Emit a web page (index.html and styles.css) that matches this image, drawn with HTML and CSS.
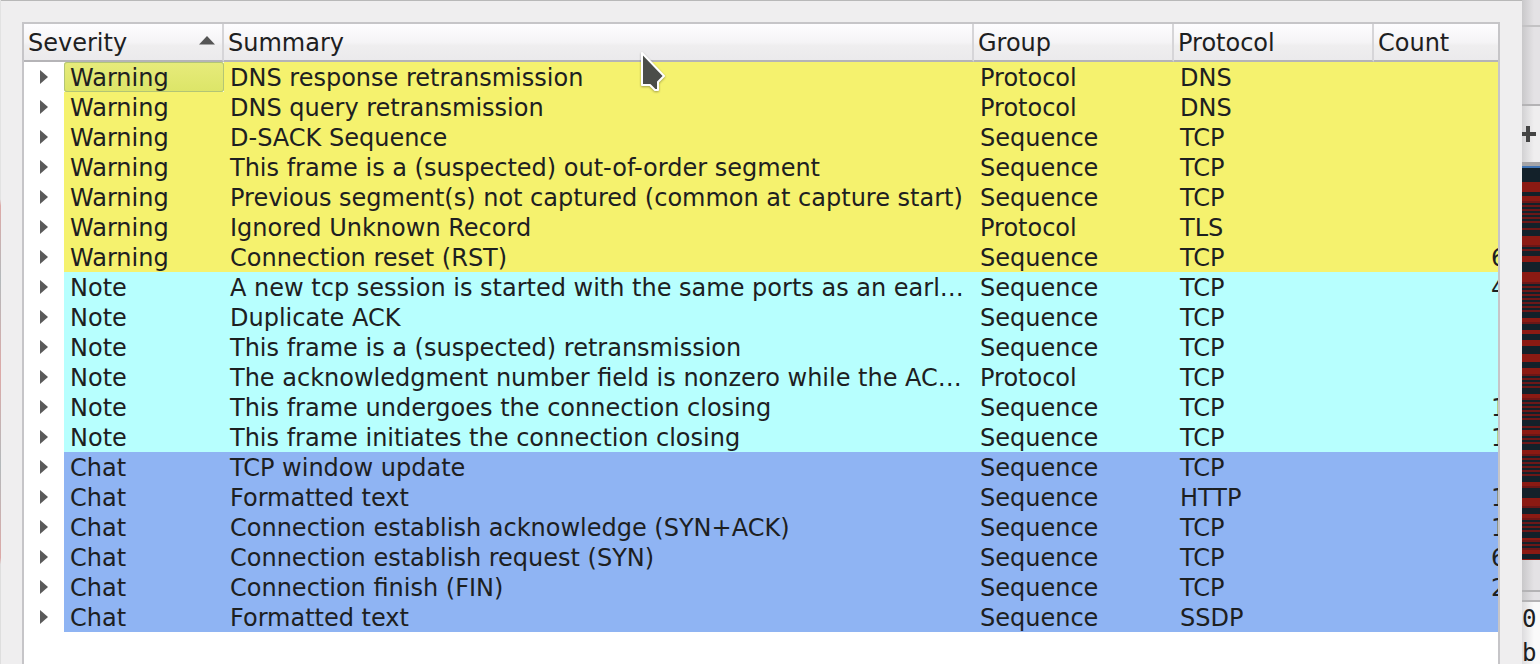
FILE: index.html
```
<!DOCTYPE html>
<html lang="en">
<head>
<meta charset="utf-8">
<title>Expert Information</title>
<link rel="stylesheet" href="styles.css">
</head>
<body>
<div class="behind-left"></div>
<main class="dialog">
  <div class="tree">
    <table class="tree-table">
      <colgroup><col class="c-branch"><col class="c-severity"><col class="c-summary"><col class="c-group"><col class="c-protocol"><col></colgroup>
      <thead>
        <tr>
          <th colspan="2" aria-sort="ascending"><span class="head">Severity<svg class="sort" viewBox="0 0 16 9" aria-hidden="true"><path d="M8 0 16 8.500H0Z"/></svg></span></th>
          <th>Summary</th><th>Group</th><th>Protocol</th><th>Count</th>
        </tr>
      </thead>
      <tbody id="rows"></tbody>
    </table>
  </div>
  <svg class="cursor" viewBox="0 0 26 42" aria-hidden="true"><path d="M2 2V34H10L15 39H18V31L24 25Z"/></svg>
</main>
<aside class="behind-right">
  <div class="bar-title"></div>
  <div class="bar-tools"></div>
  <button class="bar-filter" aria-label="Add filter button"><svg viewBox="0 0 14 16" aria-hidden="true"><path d="M0 8H14M6 0V16"/></svg></button>
  <svg class="packets" viewBox="0 0 18 392" preserveAspectRatio="none" aria-hidden="true" id="packets"></svg>
  <div class="scroll"></div>
  <div class="bytes"><span>0</span><span>b</span></div>
</aside>
<script src="app.js"></script>
</body>
</html>
```

FILE: styles.css
```
* { box-sizing: border-box; }

body {
  display: flex;
  height: 100vh;
  margin: 0;
  overflow: hidden;
  background: #efeeef;
  color: #1d2021;
  font-family: "DejaVu Sans", sans-serif;
  font-size: 24px;
}

.behind-left {
  flex: 0 0 1px;
  background: linear-gradient(#e2e2e2 30%, #dda9a7 31%, #b3b9bb 42%, #dda9a7 56%, #b3b9bb 70%, #dda9a7 84%, #dedede 85%);
}

.dialog {
  position: relative;
  display: flex;
  flex: 1;
  min-width: 0;
  padding: 21px 22px 0 21px;
  border-top: 1px solid #b8b8b8;
  background: #efeeef;
}

.tree {
  flex: 1;
  min-width: 0;
  overflow: hidden;
  border: 2px solid #c6c5c8;
  border-bottom: 0;
  background: #fff;
}

.tree-table {
  width: 100%;
  table-layout: fixed;
  border-collapse: separate;
  border-spacing: 0;
}

.c-branch { width: 40px; }
.c-severity { width: 160px; }
.c-summary { width: 750px; }
.c-group, .c-protocol { width: 200px; }

th {
  height: 38px;
  padding: 2px 4px 0;
  border-right: 2px solid #d6d5d8;
  border-bottom: 2px solid #b5b4b7;
  background: linear-gradient(#fefdff, #f5f4f6 50%, #efeeef 60%, #ebeaec);
  font-weight: normal;
  line-height: 34px;
  text-align: left;
}

th:last-child { border-right: 0; }

.head {
  display: flex;
  align-items: center;
  justify-content: space-between;
}

.sort {
  width: 16px;
  height: 9px;
  margin: 0 3px 5px 0;
  fill: #555;
}

td {
  height: 30px;
  padding: 2px 6px 0;
  overflow: hidden;
  line-height: 28px;
  text-overflow: ellipsis;
  white-space: nowrap;
}

.warning td { background: #f5f26e; }
.note td { background: #b7fffe; }
.chat td { background: #8fb4f3; }

.tree-table .branch {
  padding: 0 16px;
  background: #fff;
}

.expand {
  display: block;
  width: 8px;
  height: 30px;
  padding: 0;
  border: 0;
  background: none;
}

.expand svg {
  display: block;
  width: 8px;
  height: 14px;
  fill: #5a5a5a;
}

.tree-table .current {
  border-radius: 3px;
  background: linear-gradient(#e7eb7b, #dce568);
  box-shadow: inset 0 0 0 1px #b3c575;
}

.tree-table .count {
  padding: 2px 0 0 117px;
  text-overflow: clip;
}

.cursor {
  position: absolute;
  top: 50px;
  left: 639px;
  width: 26px;
  height: 42px;
  fill: #4b4d49;
  stroke: #fff;
  stroke-width: 2;
  stroke-linejoin: round;
  filter: drop-shadow(0 1px 1px #0005);
}

.behind-right {
  display: flex;
  flex: 0 0 18px;
  flex-direction: column;
  overflow: hidden;
  background: linear-gradient(90deg, #c9c8ca, #e4e2e5 12px);
}

.behind-right > * { flex-shrink: 0; }

.bar-title {
  height: 27px;
  border-bottom: 2px solid #c3c2c4;
}

.bar-tools {
  height: 79px;
  border-bottom: 2px solid #b4b3b5;
}

.bar-filter {
  height: 60px;
  padding: 0;
  border: 0;
  border-bottom: 4px solid #a5a4a6;
  background: linear-gradient(90deg, #d2d1d3, #efeeef 12px);
}

.bar-filter svg {
  display: block;
  width: 14px;
  height: 16px;
  stroke: #444;
  stroke-width: 4;
}

.packets {
  width: 18px;
  height: 394px;
  border-top: 2px solid #4276b5;
  background: #13212a;
}

.scroll {
  height: 32px;
  border-bottom: 2px solid #b4b3b5;
}

.bytes {
  display: flex;
  flex: 1;
  flex-direction: column;
  margin-top: 8px;
  border-top: 2px solid #b4b3b5;
  background: linear-gradient(90deg, #dddcde, #fafafa 12px);
  font-family: "DejaVu Sans Mono", monospace;
  line-height: 34px;
}
```

FILE: app.js
```
const rows = [
  ["Warning", "DNS response retransmission", "Protocol", "DNS", ""],
  ["Warning", "DNS query retransmission", "Protocol", "DNS", ""],
  ["Warning", "D-SACK Sequence", "Sequence", "TCP", ""],
  ["Warning", "This frame is a (suspected) out-of-order segment", "Sequence", "TCP", ""],
  ["Warning", "Previous segment(s) not captured (common at capture start)", "Sequence", "TCP", ""],
  ["Warning", "Ignored Unknown Record", "Protocol", "TLS", ""],
  ["Warning", "Connection reset (RST)", "Sequence", "TCP", "6"],
  ["Note", "A new tcp session is started with the same ports as an earl…", "Sequence", "TCP", "4"],
  ["Note", "Duplicate ACK", "Sequence", "TCP", ""],
  ["Note", "This frame is a (suspected) retransmission", "Sequence", "TCP", ""],
  ["Note", "The acknowledgment number field is nonzero while the AC…", "Protocol", "TCP", ""],
  ["Note", "This frame undergoes the connection closing", "Sequence", "TCP", "1"],
  ["Note", "This frame initiates the connection closing", "Sequence", "TCP", "1"],
  ["Chat", "TCP window update", "Sequence", "TCP", ""],
  ["Chat", "Formatted text", "Sequence", "HTTP", "1"],
  ["Chat", "Connection establish acknowledge (SYN+ACK)", "Sequence", "TCP", "1"],
  ["Chat", "Connection establish request (SYN)", "Sequence", "TCP", "6"],
  ["Chat", "Connection finish (FIN)", "Sequence", "TCP", "2"],
  ["Chat", "Formatted text", "Sequence", "SSDP", ""]
];

document.getElementById("rows").innerHTML = rows.map(([severity, summary, group, protocol, count], i) => `
  <tr class="${severity.toLowerCase()}">
    <td class="branch"><button class="expand" aria-label="Expand"><svg viewBox="0 0 8 14" aria-hidden="true"><path d="M0 0 8 7 0 14Z"/></svg></button></td>
    <td${i === 0 ? ' class="current"' : ""}>${severity}</td>
    <td>${summary}</td><td>${group}</td><td>${protocol}</td><td class="count">${count}</td>
  </tr>`).join("");

// Overview stripes as [kind, end]: d = dark, r = red, a = alternating thin lines.
const stripes = [["d", 14], ["r", 24], ["d", 28], ["r", 33], ["a", 54], ["d", 60], ["a", 62], ["d", 68], ["r", 77], ["a", 83],
  ["d", 88], ["r", 94], ["d", 104], ["r", 114], ["a", 146], ["d", 150], ["r", 154], ["a", 157], ["d", 162], ["r", 166],
  ["d", 172], ["r", 178], ["d", 186], ["r", 194], ["d", 200], ["r", 206], ["a", 222], ["d", 226], ["r", 230], ["a", 254],
  ["d", 258], ["a", 262], ["r", 266], ["a", 278], ["d", 282], ["r", 286], ["a", 310], ["d", 314], ["r", 318], ["a", 322],
  ["d", 330], ["r", 338], ["a", 342], ["d", 346], ["r", 350], ["a", 366], ["d", 370], ["r", 372], ["a", 382], ["r", 386],
  ["d", 391], ["r", 392]];
let y = 0;
let marks = "";
for (const [kind, end] of stripes) {
  if (kind === "r") marks += `<rect y="${y}" width="18" height="${end - y}" fill="#8b1a13"/>`;
  if (kind === "a") for (let k = y; k < end; k += 4) marks += `<rect y="${k}" width="18" height="2" fill="#6c1717"/>`;
  y = end;
}
document.getElementById("packets").innerHTML = marks;
```
